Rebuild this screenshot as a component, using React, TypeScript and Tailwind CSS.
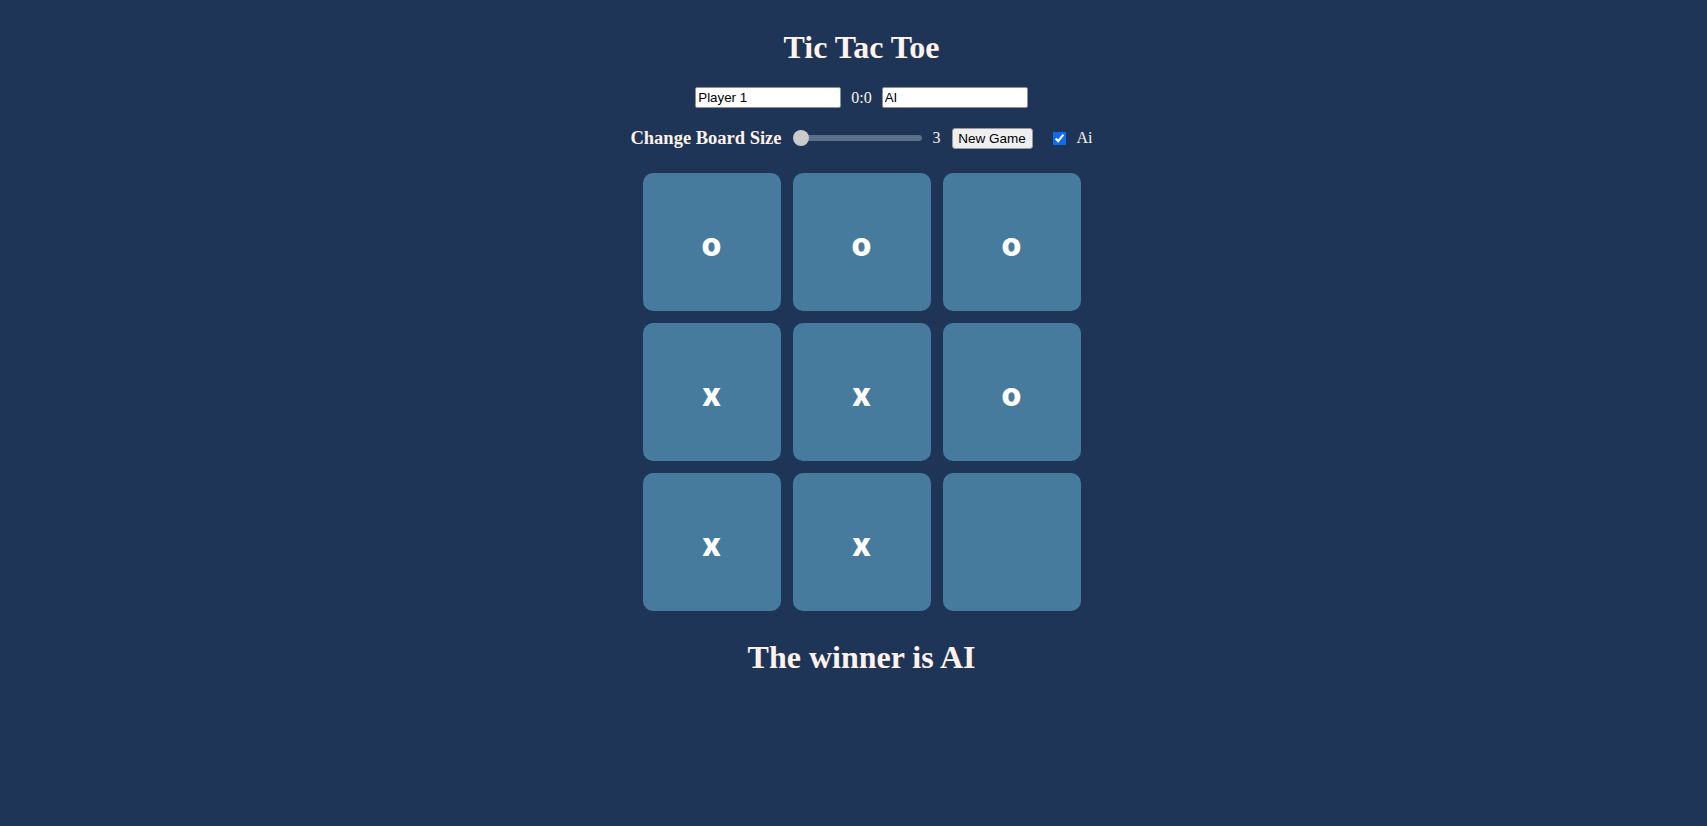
import { useState } from 'react'

// Tic Tac Toe — board state after a finished game against the AI.

const serif = "font-['Liberation_Serif','Times_New_Roman',serif]"
const sans = "font-['Liberation_Sans',Arial,sans-serif]"

const initialBoard = ['o', 'o', 'o', 'x', 'x', 'o', 'x', 'x', '']

function Cell({ value }: { value: string }) {
  return (
    <div className="w-[138px] h-[138px] rounded-[10px] bg-[#467b9d] flex items-center justify-center">
      <span className="pt-[6px] font-['Inter',sans-serif] font-extrabold text-[32px] leading-none text-white">
        {value}
      </span>
    </div>
  )
}

function Slider({ value }: { value: number }) {
  return (
    <div className="relative w-[129px] h-4">
      {/* track */}
      <div className="absolute left-[3px] right-0 top-[5px] h-[6px] rounded-full bg-[#5c6f8b]" />
      {/* thumb — value sits at the minimum */}
      <div
        className="absolute top-0 w-4 h-4 rounded-full bg-[#cbcbcb]"
        style={{ left: value === 3 ? 0 : 0 }}
      />
    </div>
  )
}

export default function App() {
  const [board] = useState(initialBoard)
  const [ai, setAi] = useState(true)

  return (
    <div className={`min-h-[826px] w-full bg-[#1e3557] pl-4 pt-[29px] text-[#fdf2ec] ${serif}`}>
      <div className="flex flex-col items-center">
        <h1 className="text-[32px] leading-[37px] font-bold">Tic Tac Toe</h1>

        <div className="mt-[21px] flex items-center gap-[10px] h-[21px]">
          <input
            defaultValue="Player 1"
            className={`w-[146px] h-[21px] bg-white text-black text-[13.33px] px-[2px] border border-[#8a8f98] rounded-[2px] outline-none ${sans}`}
          />
          <span className="text-base leading-none">0:0</span>
          <input
            defaultValue="AI"
            className={`w-[146px] h-[21px] bg-white text-black text-[13.33px] px-[2px] border border-[#8a8f98] rounded-[2px] outline-none ${sans}`}
          />
        </div>

        <div className="mt-[19px] h-[22px] flex items-center">
          <span className="text-[18.5px] font-bold leading-none">Change Board Size</span>
          <div className="ml-[11px]">
            <Slider value={3} />
          </div>
          <span className="ml-[11px] text-base leading-none">3</span>
          <button
            className={`ml-[11px] w-[81px] h-[21px] bg-[#efefef] text-black text-[13.5px] border border-[#9a9a9a] rounded-[3px] ${sans}`}
          >
            New Game
          </button>
          <input
            type="checkbox"
            checked={ai}
            onChange={() => setAi(!ai)}
            className="ml-[20px] w-[13px] h-[13px] accent-[#0b6cf0]"
          />
          <span className="ml-[11px] text-base leading-none">Ai</span>
        </div>

        <div className="mt-[24px] grid grid-cols-3 gap-3">
          {board.map((v, i) => (
            <Cell key={i} value={v} />
          ))}
        </div>

        <h1 className="mt-[28px] text-[32px] leading-[37px] font-bold">The winner is AI</h1>
      </div>
    </div>
  )
}
